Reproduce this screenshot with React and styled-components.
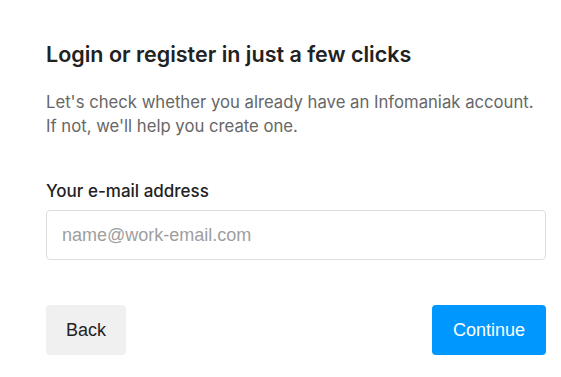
import styled, { createGlobalStyle } from "styled-components";

const GlobalStyle = createGlobalStyle`
  body {
    margin: 0;
    background: #ffffff;
    font-family: Inter, "Liberation Sans", sans-serif;
  }
`;

const Page = styled.div`
  width: 500px;
  padding: 38px 15px 0 46px;
  box-sizing: content-box;
`;

const Title = styled.h1`
  margin: 0 0 20px;
  font-size: 21.5px;
  line-height: 32px;
  font-weight: 600;
  color: #222222;
`;

const Intro = styled.p`
  margin: 0 0 41px;
  font-size: 16.7px;
  line-height: 24px;
  color: #666666;
`;

const Label = styled.label`
  display: block;
  margin-bottom: 7px;
  font-size: 17px;
  line-height: 24px;
  font-weight: 500;
  color: #222222;
`;

const Input = styled.input`
  display: block;
  width: 100%;
  height: 50px;
  box-sizing: border-box;
  padding: 0 15px;
  border: 1px solid #dddddd;
  border-radius: 4px;
  font-family: "Liberation Sans", Arial, sans-serif;
  font-size: 18px;
  color: #333333;
  outline: none;

  &::placeholder {
    color: #9e9e9e;
  }
`;

const Actions = styled.div`
  display: flex;
  justify-content: space-between;
  margin-top: 45px;
`;

const Button = styled.button`
  height: 50px;
  padding: 0 ${(p) => (p.$primary ? "21px" : "20px")};
  border: none;
  border-radius: 4px;
  font-family: "Liberation Sans", Arial, sans-serif;
  font-size: 18px;
  cursor: pointer;
  background: ${(p) => (p.$primary ? "#0098ff" : "#f0f0f0")};
  color: ${(p) => (p.$primary ? "#ffffff" : "#222222")};
`;

export default function App() {
  return (
    <Page>
      <GlobalStyle />
      <Title>Login or register in just a few clicks</Title>
      <Intro>
        Let's check whether you already have an Infomaniak account.
        <br />
        If not, we'll help you create one.
      </Intro>
      <Label htmlFor="email">Your e-mail address</Label>
      <Input id="email" type="email" placeholder="name@work-email.com" />
      <Actions>
        <Button>Back</Button>
        <Button $primary>Continue</Button>
      </Actions>
    </Page>
  );
}
